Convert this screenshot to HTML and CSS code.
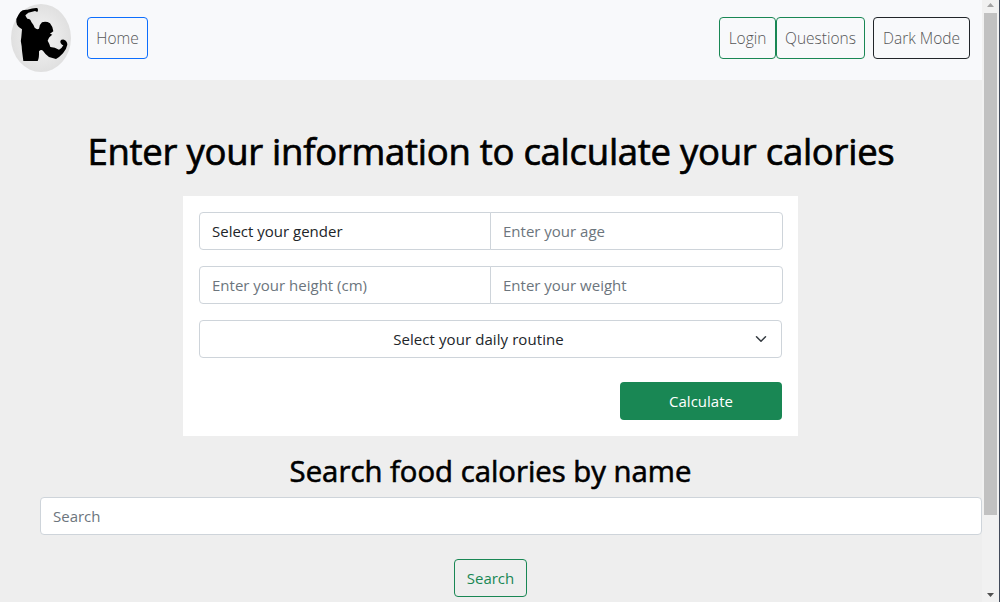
FILE: index.html
```html
<!DOCTYPE html>
<html lang="en">
<head>
<meta charset="utf-8">
<title>Calories calculator</title>
<link rel="stylesheet" href="styles.css">
</head>
<body>
<div class="window">
  <div class="page">
    <nav class="navbar">
      <svg class="logo" viewBox="18 12 180 204" preserveAspectRatio="none">
        <defs>
          <radialGradient id="disc"><stop offset="0" stop-color="#f3f3f3"/><stop offset=".55" stop-color="#e9e9e9"/><stop offset="1" stop-color="#e0e0e0"/></radialGradient>
        </defs>
        <ellipse cx="108" cy="114" rx="90" ry="102" fill="url(#disc)"/>
        <path d="M97 24 Q85 23 67 29 Q52 28 46 36 Q39 45 34 57 Q33 66 36 74 Q41 83 51 88 L49 111 Q45 124 50 139 L51 152 L55 183 L98 183 Q103 174 102 154 Q109 146 115 154 Q121 164 132 171 L153 177 Q164 171 174 160 Q185 146 187 134 Q187 123 177 119 Q169 118 166 123 Q165 130 171 134 L175 136 Q171 145 162 149 Q150 141 136 141 Q134 132 128 122 L132 113 Q139 106 142 104 L135 101 L145 94 Q143 79 135 70 Q124 63 111 67 Q102 75 102 86 Q96 90 89 83 Q85 73 79 66 Q77 56 67 56 Q63 51 61 46 L70 38 L90 33 L97 36 Q102 31 97 24Z" fill="#000"/>
      </svg>
      <a class="nav-btn blue">Home</a>
      <div class="nav-right">
        <a class="nav-btn green login">Login</a>
        <a class="nav-btn green questions">Questions</a>
        <a class="nav-btn dark">Dark Mode</a>
      </div>
    </nav>
    <main class="main">
      <h1 class="title">Enter your information to calculate your calories</h1>
      <form class="card">
        <div class="group">
          <select class="field first"><option>Select your gender</option></select>
          <input class="field last" placeholder="Enter your age">
        </div>
        <div class="group">
          <input class="field first" placeholder="Enter your height (cm)">
          <input class="field last" placeholder="Enter your weight">
        </div>
        <div class="routine-box">
          <select class="field routine"><option>Select your daily routine</option></select>
          <svg class="chevron" viewBox="0 0 16 16"><path d="m2 5 6 6 6-6" fill="none" stroke="#343a40" stroke-width="2" stroke-linecap="round" stroke-linejoin="round"/></svg>
        </div>
        <button class="calculate" type="button">Calculate</button>
      </form>
      <h2 class="subtitle">Search food calories by name</h2>
      <input class="field search" placeholder="Search">
      <button class="search-btn" type="button">Search</button>
    </main>
  </div>
  <div class="scrollbar">
    <svg class="arrow" viewBox="0 0 7 4"><path d="M0 4 3.5 0 7 4Z" fill="#a3a3a3"/></svg>
    <div class="thumb"></div>
    <svg class="arrow down" viewBox="0 0 7 4"><path d="M0 0H7L3.5 4Z" fill="#505050"/></svg>
  </div>
</div>
</body>
</html>
```
FILE: styles.css
```css
* { box-sizing: border-box; }
body {
  margin: 0;
  font: 15px/24px "Open Sans", "Noto Sans", sans-serif;
  color: #212529;
}
.window { display: flex; width: 1000px; height: 602px; overflow: hidden; background: #eee; }
.page { width: 982px; flex: none; }
.navbar { display: flex; height: 80px; padding: 4px 12px 0 11px; background: #f8f9fb; }
.logo { width: 60px; height: 68px; margin-right: 16px; }
.nav-right { display: flex; margin-left: auto; }
.nav-btn {
  height: 42px;
  margin-top: 13px;
  padding: 8px 0;
  border: 1px solid;
  border-radius: 4px;
  text-align: center;
  white-space: nowrap;
  font-size: 15.5px;
  font-weight: 300;
  color: #555657;
}
.blue { width: 61px; border-color: #0d6efd; }
.green { border-color: #198754; }
.login { width: 57px; }
.questions { width: 89px; }
.dark { width: 97px; margin-left: 8px; border-color: #212529; }
.main { display: flex; flex-direction: column; align-items: center; }
.title {
  margin: 47px 0 0;
  height: 69px;
  font-size: 36.5px;
  line-height: 48px;
  font-weight: 400;
  letter-spacing: -0.27px;
  -webkit-text-stroke: 0.7px #000;
  color: #000;
  white-space: nowrap;
}
.card {
  display: flex;
  flex-direction: column;
  gap: 16px;
  width: 615px;
  height: 240px;
  margin-right: 1px;
  padding: 16px;
  background: #fff;
}
.group { display: flex; width: 584px; }
.field {
  display: block;
  height: 38px;
  margin: 0;
  padding: 6px 12px;
  border: 1px solid #ced4da;
  border-radius: 4px;
  background: #fff;
  font: inherit;
  color: #212529;
  appearance: none;
}
.field::placeholder { color: #6c757d; opacity: 1; }
.first { width: 292px; border-radius: 4px 0 0 4px; }
.last { width: 293px; margin-left: -1px; border-radius: 0 4px 4px 0; }
.routine-box { position: relative; width: 583px; }
.routine { width: 100%; padding-right: 36px; text-align: center; text-align-last: center; letter-spacing: 0.08px; }
.chevron { position: absolute; right: 13px; top: 13px; width: 16px; height: 12px; }
.calculate {
  align-self: flex-end;
  width: 162px;
  height: 38px;
  margin: 8px 0 0;
  padding: 0;
  border: 0;
  border-radius: 4px;
  background: #198754;
  color: #fff;
  font: inherit;
}
.subtitle {
  margin: 16px 1px 0 0;
  height: 45px;
  font-size: 29.3px;
  line-height: 38px;
  font-weight: 400;
  -webkit-text-stroke: 0.6px #000;
  color: #000;
  white-space: nowrap;
}
.search { width: 942px; align-self: flex-end; }
.search-btn {
  width: 73px;
  height: 38px;
  margin: 24px 1px 0 0;
  padding: 0;
  border: 1px solid #198754;
  border-radius: 4px;
  background: transparent;
  color: #198754;
  font: inherit;
}
.scrollbar {
  display: flex;
  flex-direction: column;
  align-items: center;
  width: 18px;
  padding: 3px 1px 5px 0;
  border-right: 1px solid #414a5a;
  background: #f1f1f1;
}
.arrow { width: 7px; height: 4px; }
.thumb { width: 13px; height: 502px; margin-top: 6px; background: #c1c1c1; }
.down { margin-top: auto; }
```
